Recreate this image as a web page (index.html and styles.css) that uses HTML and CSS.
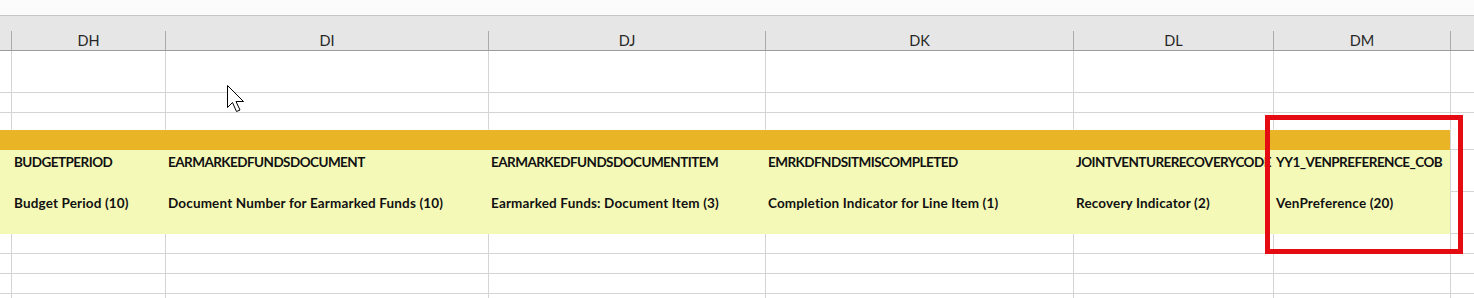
FILE: index.html
```html
<!DOCTYPE html>
<html lang="en">
<head>
<meta charset="utf-8">
<title>Sheet</title>
<link rel="stylesheet" href="styles.css">
</head>
<body>
<div class="sheet">
  <div class="ribbon-gap"></div>
  <div class="row colhead">
    <div class="hc edge"></div>
    <div class="hc">DH</div>
    <div class="hc">DI</div>
    <div class="hc">DJ</div>
    <div class="hc">DK</div>
    <div class="hc">DL</div>
    <div class="hc">DM</div>
    <div class="hc"></div>
  </div>

  <div class="row r42"><div class="c edge"></div><div class="c"></div><div class="c"></div><div class="c"></div><div class="c"></div><div class="c"></div><div class="c"></div><div class="c"></div></div>
  <div class="row r20"><div class="c edge"></div><div class="c"></div><div class="c"></div><div class="c"></div><div class="c"></div><div class="c"></div><div class="c"></div><div class="c"></div></div>
  <div class="row r17"><div class="c edge"></div><div class="c"></div><div class="c"></div><div class="c"></div><div class="c"></div><div class="c"></div><div class="c"></div><div class="c"></div></div>

  <div class="row r20 band">
    <div class="c edge fill-gold"></div><div class="c fill-gold"></div><div class="c fill-gold"></div><div class="c fill-gold"></div><div class="c fill-gold"></div><div class="c fill-gold"></div><div class="c fill-gold"></div><div class="c"></div>
  </div>
  <div class="row r42 band">
    <div class="c edge fill-lime"></div>
    <div class="c fill-lime t code">BUDGETPERIOD</div>
    <div class="c fill-lime t code">EARMARKEDFUNDSDOCUMENT</div>
    <div class="c fill-lime t code">EARMARKEDFUNDSDOCUMENTITEM</div>
    <div class="c fill-lime t code">EMRKDFNDSITMISCOMPLETED</div>
    <div class="c fill-lime t code">JOINTVENTURERECOVERYCODE</div>
    <div class="c fill-lime t code">YY1_VENPREFERENCE_COB</div>
    <div class="c"></div>
  </div>
  <div class="row r42 band">
    <div class="c edge fill-lime"></div>
    <div class="c fill-lime t label">Budget Period (10)</div>
    <div class="c fill-lime t label">Document Number for Earmarked Funds (10)</div>
    <div class="c fill-lime t label">Earmarked Funds: Document Item (3)</div>
    <div class="c fill-lime t label">Completion Indicator for Line Item (1)</div>
    <div class="c fill-lime t label">Recovery Indicator (2)</div>
    <div class="c fill-lime t label">VenPreference (20)</div>
    <div class="c"></div>
  </div>

  <div class="row r20"><div class="c edge"></div><div class="c"></div><div class="c"></div><div class="c"></div><div class="c"></div><div class="c"></div><div class="c"></div><div class="c"></div></div>
  <div class="row r20"><div class="c edge"></div><div class="c"></div><div class="c"></div><div class="c"></div><div class="c"></div><div class="c"></div><div class="c"></div><div class="c"></div></div>
  <div class="row r20"><div class="c edge"></div><div class="c"></div><div class="c"></div><div class="c"></div><div class="c"></div><div class="c"></div><div class="c"></div><div class="c"></div></div>
  <div class="row r20"><div class="c edge"></div><div class="c"></div><div class="c"></div><div class="c"></div><div class="c"></div><div class="c"></div><div class="c"></div><div class="c"></div></div>

  <div class="callout"></div>

  <svg class="pointer" width="19" height="28" viewBox="0 0 19 28" aria-hidden="true">
    <path d="M0.5 0.5 L0.5 22.5 L5.5 17.5 L9.5 26.5 L13 25 L9 16.5 L16.5 16.5 Z" fill="#ffffff" stroke="#000000" stroke-width="1" stroke-linejoin="miter"/>
  </svg>
</div>
</body>
</html>
```

FILE: styles.css
```css
html, body {
  margin: 0;
  padding: 0;
  background: #ffffff;
}

.sheet {
  position: relative;
  width: 1474px;
  height: 298px;
  overflow: hidden;
  font-family: "Lato", "Liberation Sans", sans-serif;
}

.ribbon-gap {
  height: 15px;
  background: #fbfbfb;
}

.row {
  display: grid;
  grid-template-columns: 11px 154px 323px 277px 308px 200px 177px 24px;
}

/* column letters */
.colhead {
  height: 34px;
  background: #e6e6e6;
  border-top: 1px solid #c6c6c6;
  border-bottom: 1px solid #9c9c9c;
  align-items: end;
}

.hc {
  height: 19px;
  line-height: 19px;
  border-left: 1px solid #ababab;
  text-align: center;
  font-family: "Lato", "Noto Sans", sans-serif;
  font-size: 14.5px;
  color: #262626;
}

.hc.edge {
  border-left: none;
}

/* body cells */
.c {
  border-left: 1px solid #d4d4d4;
  border-bottom: 1px solid #d4d4d4;
  box-sizing: border-box;
  overflow: hidden;
  white-space: nowrap;
}

.c.edge {
  border-left: none;
}

.r42 { height: 42px; }
.r20 { height: 20px; }
.r17 { height: 17px; }

.r17 .c { border-bottom-color: transparent; }

.fill-gold {
  background: #e9b526;
  border-color: #e9b526;
}

.fill-lime {
  background: #f5f9b8;
  border-color: #f5f9b8;
}

.t {
  padding: 4px 0 0 2px;
  font-family: "Lato", "Liberation Sans", sans-serif;
  font-weight: 700;
  font-size: 13.5px;
  line-height: 16px;
  color: #111111;
}

/* field names in caps run tighter than the descriptions */
.t.code {
  letter-spacing: -0.55px;
}

.t.label {
  padding-top: 3px;
  letter-spacing: 0.15px;
}

/* highlight frame drawn over the last filled column */
.callout {
  position: absolute;
  left: 1265px;
  top: 115px;
  width: 188px;
  height: 129px;
  border: 5px solid #e50b12;
}

.pointer {
  position: absolute;
  left: 227px;
  top: 85px;
}
```
